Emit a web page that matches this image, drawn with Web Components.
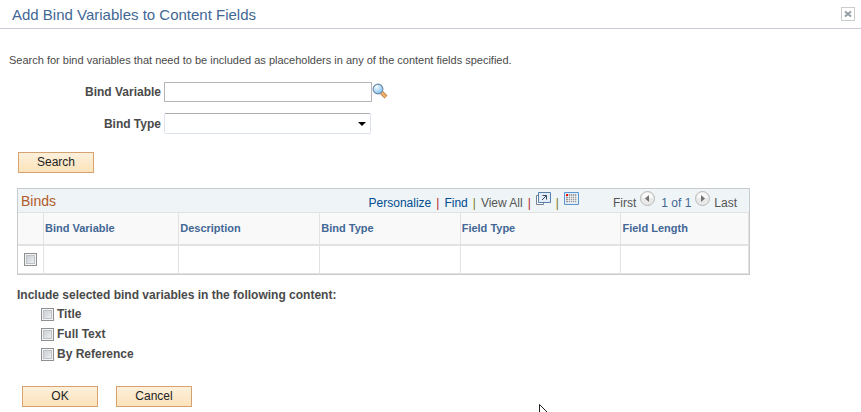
<!DOCTYPE html>
<html lang="en">
<head>
<meta charset="utf-8">
<title>Add Bind Variables to Content Fields</title>
<style>
  body{margin:0;background:#fff;color:#4a4a4a;font:12px/20px "Liberation Sans",Arial,sans-serif}
</style>
</head>
<body>
<modal-page>
  <span slot="title">Add Bind Variables to Content Fields</span>
  <search-form></search-form>
  <bind-grid></bind-grid>
  <content-options></content-options>
  <div slot="actions"><push-button>OK</push-button></div>
  <div slot="actions"><push-button>Cancel</push-button></div>
</modal-page>
<mouse-pointer></mouse-pointer>

<script>
// shared look of the tick boxes
const checkCss = `
  input[type=checkbox]{appearance:none;flex:none;box-sizing:border-box;width:13px;height:13px;margin:0;
    border:1px solid #8e8f8f;background:linear-gradient(135deg,#c3c8cd,#f4f5f6);
    box-shadow:inset 0 0 0 1px #f4f4f4,inset 0 0 0 2px #bcc2c7}
  input[type=checkbox]:checked{background:#33547c}
`;

customElements.define('modal-page', class extends HTMLElement {
  constructor(){
    super();
    this.attachShadow({mode:'open'}).innerHTML = `
      <style>
        :host{display:block}
        header{display:flex;align-items:center;justify-content:space-between;height:28px;padding:0 6px 0 12px;border-bottom:1px solid #c9cad3}
        h1{margin:0;padding-top:2px;font-size:15px;line-height:26px;font-weight:normal;color:#426795}
        .close{display:flex;align-items:center;justify-content:center;box-sizing:border-box;width:14px;height:14px;padding:0;border:1px solid #c8cdd0;background:#fff}
        main{padding:21px 0 0 17px}
        footer{display:flex;gap:18px;padding:22px 0 4px 5px}
      </style>
      <header>
        <h1><slot name="title"></slot></h1>
        <button class="close" aria-label="Close">
          <svg width="8" height="8" viewBox="0 0 8 8"><path d="M1 1.500L7 6.500M7 1.500L1 6.500" stroke="#929ca1" stroke-width="2"/></svg>
        </button>
      </header>
      <main>
        <slot></slot>
        <footer><slot name="actions"></slot></footer>
      </main>
    `;
  }
});

customElements.define('push-button', class extends HTMLElement {
  constructor(){
    super();
    this.attachShadow({mode:'open'}).innerHTML = `
      <style>
        :host{display:block}
        button{display:block;box-sizing:border-box;width:76px;height:21px;padding:0;border:1px solid #d8a270;
          background:linear-gradient(#fdf0dc,#fce3ba);color:#222;font:12px/19px "Liberation Sans",Arial,sans-serif}
      </style>
      <button><slot></slot></button>
    `;
  }
});

customElements.define('search-form', class extends HTMLElement {
  constructor(){
    super();
    this.attachShadow({mode:'open'}).innerHTML = `
      <style>
        :host{display:block}
        p{margin:0 0 12px -8px;font-size:11px}
        .fields{display:grid;grid-template-columns:144px 208px auto;column-gap:3px;row-gap:11px;align-items:center}
        label{font-weight:bold;text-align:right}
        input,select{box-sizing:border-box;margin:0;background:#fff;color:#333;font:inherit}
        input{width:208px;height:20px;padding:0 3px;border:1px solid #b5b5b5}
        select{appearance:none;width:207px;height:21px;padding:0 20px 0 4px;border:1px solid #dde3ec;border-top-color:#abadb3;border-radius:2px;
          background:#fff url('data:image/svg+xml,<svg xmlns="http://www.w3.org/2000/svg" width="8" height="4"><path d="M0 0h8L4 4z"/></svg>') no-repeat right 4px center}
        .lookup{display:block;width:16px;height:16px;padding:0;border:0;background:none;margin:-2px 0 0 -3px}
        svg{display:block}
        push-button{margin:18px 0 15px 1px}
      </style>
      <p>Search for bind variables that need to be included as placeholders in any of the content fields specified.</p>
      <div class="fields">
        <label for="variable">Bind Variable</label>
        <input id="variable" type="text">
        <button class="lookup" aria-label="Look up Bind Variable">
          <svg width="16" height="16" viewBox="0 0 16 16">
            <defs><radialGradient id="lens" cx=".35" cy=".3" r=".8"><stop offset="0" stop-color="#f5fcff"/><stop offset="1" stop-color="#76bdf0"/></radialGradient></defs>
            <path d="M9.500 9.500L14 14" stroke="#b07a48" stroke-width="4"/>
            <path d="M9.500 9.500L14 14" stroke="#efb06a" stroke-width="2.500"/>
            <circle cx="6" cy="6" r="4.900" fill="url(#lens)" stroke="#6e87a4" stroke-width="1.100"/>
          </svg>
        </button>
        <label for="type">Bind Type</label>
        <select id="type"><option></option></select>
      </div>
      <push-button>Search</push-button>
    `;
  }
});

customElements.define('bind-grid', class extends HTMLElement {
  constructor(){
    super();
    const cols = ['Bind Variable', 'Description', 'Bind Type', 'Field Type', 'Field Length'];
    this.attachShadow({mode:'open'}).innerHTML = `
      <style>
        ${checkCss}
        :host{display:block;margin-right:111px;border:1px solid #c6cbd0}
        .bar{display:flex;align-items:center;height:23px;padding:0 12px 0 3px;background:#eff4f6}
        h2{flex:1;margin:0;font-size:14px;font-weight:normal;color:#b25b2a}
        a{color:#004b91;text-decoration:none}
        a.plain,.off{color:#555}
        .tools,.pager{display:flex;align-items:center;gap:5px;padding-top:4px}
        .tools i{font-style:normal;color:#b5232a}
        .tools i.alt{color:#77801c}
        .icon{align-self:flex-start;margin-top:-1px}
        .pager{gap:4px;margin-left:34px}
        .pager button{width:15px;height:15px;padding:0;border:0;background:none;margin-top:-8px}
        .pager b{font-weight:normal;color:#426795;margin-left:2px}
        svg{display:block}
        table{width:100%;table-layout:fixed;border-collapse:separate;border-spacing:0}
        th,td{box-sizing:border-box;padding:0 1px;border-top:1px solid #e2e2e2;border-right:1px solid #e2e2e2;text-align:left}
        th{height:33px;padding-bottom:2px;font-size:11px;line-height:20px;color:#426795;background:#f9f9f9;border-bottom:1px solid #e2e2e2}
        td{height:29px;border-bottom:1px solid #e2e2e2}
        td input[type=checkbox]{display:block;margin:0 auto}
        .pick{width:26px}
      </style>
      <div class="bar">
        <h2>Binds</h2>
        <div class="tools">
          <a href="#">Personalize</a><i>|</i><a href="#">Find</a><i class="alt">|</i><a class="plain" href="#">View All</a><i>|</i>
          <a class="icon" href="#" aria-label="Zoom grid">
            <svg width="15" height="13" viewBox="0 0 15 13">
              <path d="M3 3.500H.5v9h7V11" fill="#fff" stroke="#78818f"/>
              <path d="M2.500.5h12v10h-12z" fill="#e4edf7" stroke="#5680ad"/>
              <path d="M6 8l4.500-4.500M6.500 3.500h4v4" fill="none" stroke="#34495f"/>
            </svg>
          </a>
          <i class="alt">|</i>
          <a class="icon" href="#" aria-label="Download grid">
            <svg width="15" height="13" viewBox="0 0 15 13">
              <path d="M.5.5h14v12H.5z" fill="#e3effb" stroke="#5c96d2"/>
              <path d="M2 2h11v9H2z" fill="#989ca0"/>
              <path d="M4.500 2v9M6.500 2v9M8.500 2v9M10.500 2v9M12.500 2v9M2 4.500h11M2 6.500h11M2 8.500h11M2 10.500h11" stroke="#fff" stroke-width=".6"/>
              <path d="M2 2h2v2H2z" fill="#f00"/>
            </svg>
          </a>
        </div>
        <div class="pager">
          <span class="off">First</span>
          <button aria-label="Previous">${this.arrow('M9 4v7L5 7.500z')}</button>
          <b>1 of 1</b>
          <button aria-label="Next">${this.arrow('M6 4v7l4-3.500z')}</button>
          <span class="off">Last</span>
        </div>
      </div>
      <table>
        <colgroup><col class="pick"><col style="width:18.500%"><col style="width:19.300%"><col style="width:19.200%"><col style="width:22%"><col></colgroup>
        <thead><tr><th></th>${cols.map(c => `<th>${c}</th>`).join('')}</tr></thead>
        <tbody><tr><td><input type="checkbox" aria-label="Select row"></td>${cols.map(() => '<td></td>').join('')}</tr></tbody>
      </table>
    `;
  }

  arrow(d){
    return `<svg width="15" height="15" viewBox="0 0 15 15">
      <circle cx="7.500" cy="7.500" r="7" fill="#e9e9e9" stroke="#b9b9b9"/>
      <path d="M2 7a5.500 5.500 0 0 1 11 0z" fill="#fafafa"/>
      <path d="${d}" fill="#737373"/>
    </svg>`;
  }
});

customElements.define('content-options', class extends HTMLElement {
  constructor(){
    super();
    this.attachShadow({mode:'open'}).innerHTML = `
      <style>
        ${checkCss}
        :host{display:block;padding-top:12px;font-weight:bold}
        fieldset{margin:0;padding:0;border:0}
        legend{padding:0;line-height:17px}
        label{display:flex;align-items:center;gap:3px;height:20px;margin-left:24px}
      </style>
      <fieldset>
        <legend>Include selected bind variables in the following content:</legend>
        ${['Title', 'Full Text', 'By Reference'].map(t => `<label><input type="checkbox">${t}</label>`).join('')}
      </fieldset>
    `;
  }
});

// pointer resting at the bottom edge of the window
customElements.define('mouse-pointer', class extends HTMLElement {
  constructor(){
    super();
    this.attachShadow({mode:'open'}).innerHTML = `
      <style>
        :host{position:fixed;left:539px;bottom:0;pointer-events:none}
        svg{display:block}
      </style>
      <svg width="12" height="8" viewBox="0 0 12 8"><path d="M.5 16V.5L11 11" fill="#fff" stroke="#222"/></svg>
    `;
  }
});
</script>
</body>
</html>
